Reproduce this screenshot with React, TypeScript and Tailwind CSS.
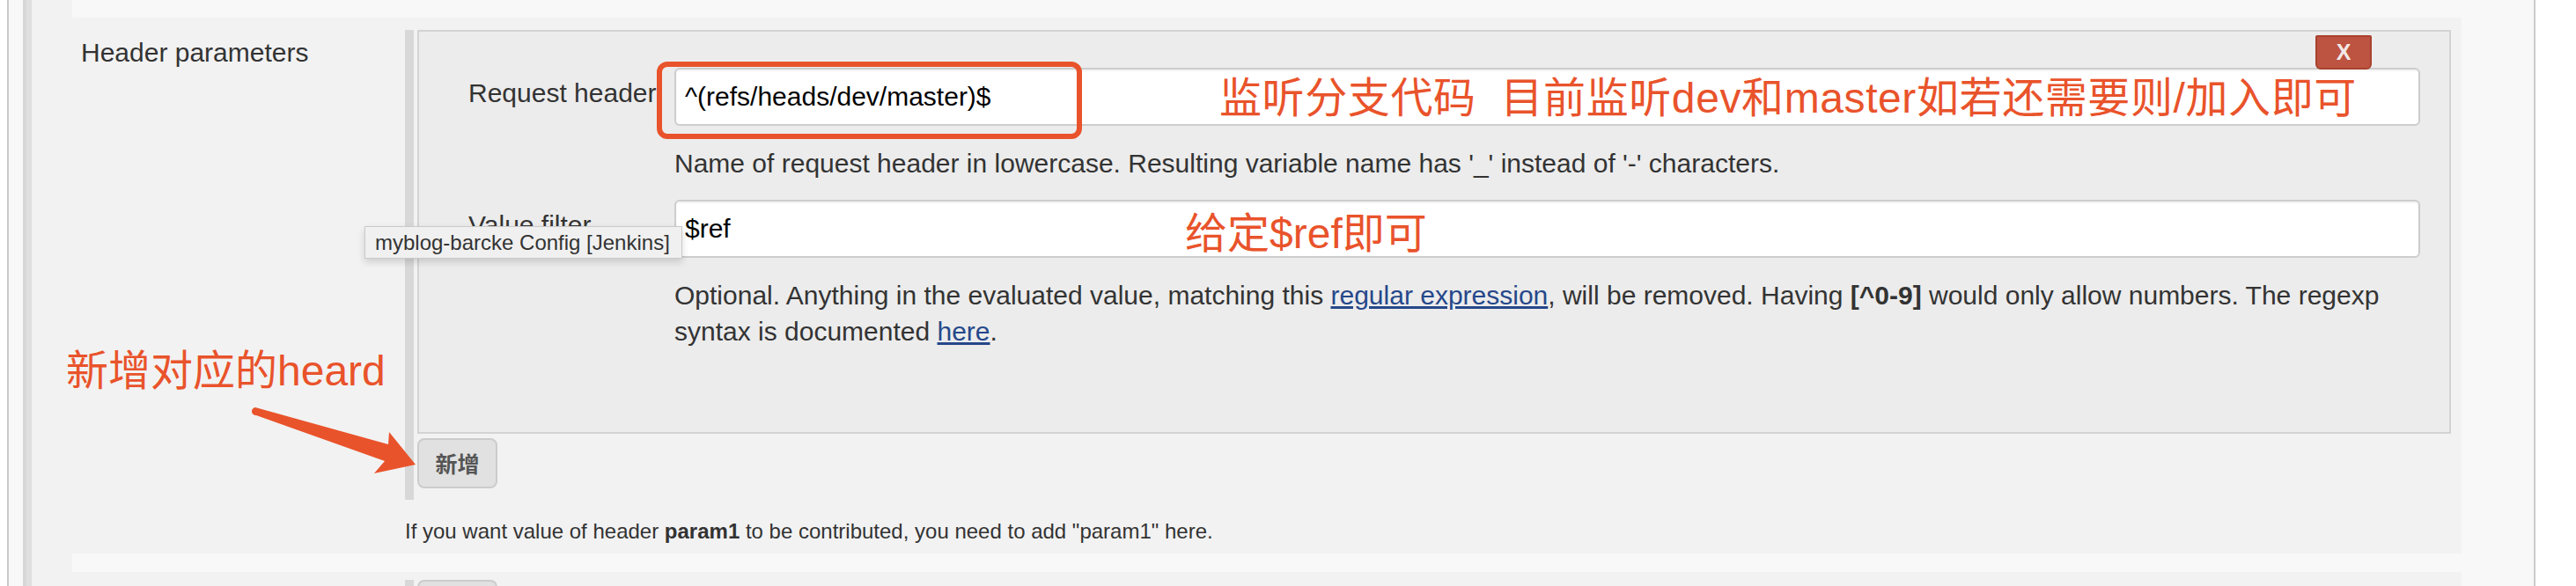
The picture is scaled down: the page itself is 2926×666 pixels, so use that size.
const orange = "text-[#e9532b]";

const Field = ({ value, children }: { value: string; children?: React.ReactNode }) => (
  <div className="relative flex h-[66px] w-[1983px] items-center rounded-[6px] border-2 border-[#cdcdcd] bg-white pl-[10px] text-[30px] leading-[34px] text-black shadow-[inset_0_2px_2px_rgba(0,0,0,0.05)]">
    {value}
    {children}
  </div>
);

const HeaderChunk = () => {
  return (
    <div className="relative h-[459px] w-[2310px] border-2 border-[#d3d3d3] bg-[#ececec] pl-[56px] pt-[41px] text-[30px] text-[#333]">
      <div className="flex items-start">
        <div className="w-[234px] pt-[8px] leading-[41px]">Request header</div>
        <Field value="^(refs/heads/dev/master)$">
          <div className="absolute left-[-22px] top-[-9px] h-[88px] w-[483px] rounded-[12px] border-[6px] border-[#e9532b]" />
          <div className={`absolute left-[617px] top-[9px] whitespace-pre text-[48px] leading-[48px] tracking-[0.6px] ${orange}`}>
            监听分支代码  目前监听dev和master如若还需要则/加入即可
          </div>
        </Field>
      </div>
      <div className="ml-[234px] mt-[22px] leading-[41px]">
        Name of request header in lowercase. Resulting variable name has '_' instead of '-' characters.
      </div>
      <div className="mt-[21px] flex items-start">
        <div className="w-[234px] pt-[8px] leading-[41px]">Value filter</div>
        <Field value="$ref">
          <div className={`absolute left-[578px] top-[13px] whitespace-pre text-[48px] leading-[48px] ${orange}`}>
            给定$ref即可
          </div>
        </Field>
      </div>
      <div className="ml-[234px] mt-[22px] leading-[41px]">
        <div className="whitespace-nowrap">
          Optional. Anything in the evaluated value, matching this{" "}
          <a className="text-[#26488a] underline">regular expression</a>, will be removed. Having{" "}
          <b>[^0-9]</b> would only allow numbers. The regexp
        </div>
        <div>
          syntax is documented <a className="text-[#26488a] underline">here</a>.
        </div>
      </div>
      <button className="absolute right-[88px] top-[4px] z-10 flex h-[39px] w-[64px] items-center justify-center rounded-b-[6px] rounded-t-[2px] border-2 border-[#a9412f] bg-[#bd5341] text-[25px] font-bold leading-none text-[#f3e9e7]">
        X
      </button>
    </div>
  );
};

export default function App() {
  return (
    <div className="relative flex h-[666px] w-[2926px] overflow-hidden bg-white font-['Liberation_Sans','Noto_Sans_CJK_SC',sans-serif]">
      <div className="w-[8px]" />
      <div className="w-[2px] bg-[#c9c9c9]" />
      <div className="w-[16px] bg-[#f8f8f8]" />
      <div className="w-[4px] bg-[#d7d7d7]" />
      <div className="w-[6px] bg-[#dfdfdf]" />
      <main className="flex w-[2822px] flex-col bg-[#f2f2f2]">
        <div className="h-[4px]" />
        <div className="flex flex-1">
          <div className="w-[46px]" />
          <div className="flex flex-1 flex-col bg-[#f8f8f8]">
            <div className="h-[20px]" />
            <section className="flex h-[609px] w-[2714px] bg-[#f2f2f2]">
              <div className="w-[378px] pl-[10px] pt-[23px] text-[30px] leading-[34px] text-[#333]">
                Header parameters
              </div>
              <div className="flex flex-col pt-[14px]">
                <div className="flex">
                  <div className="w-[10px] bg-[#d8d8d8]" />
                  <div className="ml-[4px] flex flex-col pb-[13px]">
                    <HeaderChunk />
                    <button className="mt-[5px] flex h-[57px] w-[91px] items-center justify-center rounded-[8px] border-2 border-[#cccccc] bg-[#e1e1e1] font-['Noto_Sans_CJK_SC',sans-serif] text-[25px] font-bold text-[#555]">
                      新增
                    </button>
                  </div>
                </div>
                <p className="mt-[22px] text-[24px] leading-[28px] text-[#333]">
                  If you want value of header <b>param1</b> to be contributed, you need to add "param1" here.
                </p>
              </div>
            </section>
            <div className="h-[21px]" />
            <section className="flex w-[2714px] flex-1 bg-[#f2f2f2] pl-[378px] pt-[9px]">
              <div className="w-[10px] bg-[#d8d8d8]" />
              <div className="ml-[4px] h-[20px] w-[91px] rounded-t-[8px] border-2 border-[#cccccc] bg-[#e1e1e1]" />
            </section>
          </div>
        </div>
      </main>
      <div className="w-[20px] bg-[#f8f8f8]" />
      <div className="w-[2px] bg-[#cccccc]" />
      <div className="flex-1 bg-white" />

      {/* screenshot annotations */}
      <div className={`absolute left-[75px] top-[398px] whitespace-pre text-[48px] leading-[48px] ${orange}`}>
        新增对应的heard
      </div>
      <svg className="absolute left-[280px] top-[455px]" width="200" height="90" viewBox="0 0 200 90">
        <path d="M10 8 L161 50 L162 36 L192 73 L145 83 L157 69 L11 17 A4.5 4.5 0 0 1 10 8 Z" fill="#e9532b" />
      </svg>
      <div className="absolute left-[414px] top-[257px] h-[37px] w-[361px] border border-[#cacaca] bg-[#f0f0f0] pl-[11px] text-[24px] leading-[35px] text-[#333] shadow-[0_4px_8px_rgba(0,0,0,0.15)]">
        myblog-barcke Config [Jenkins]
      </div>
    </div>
  );
}
